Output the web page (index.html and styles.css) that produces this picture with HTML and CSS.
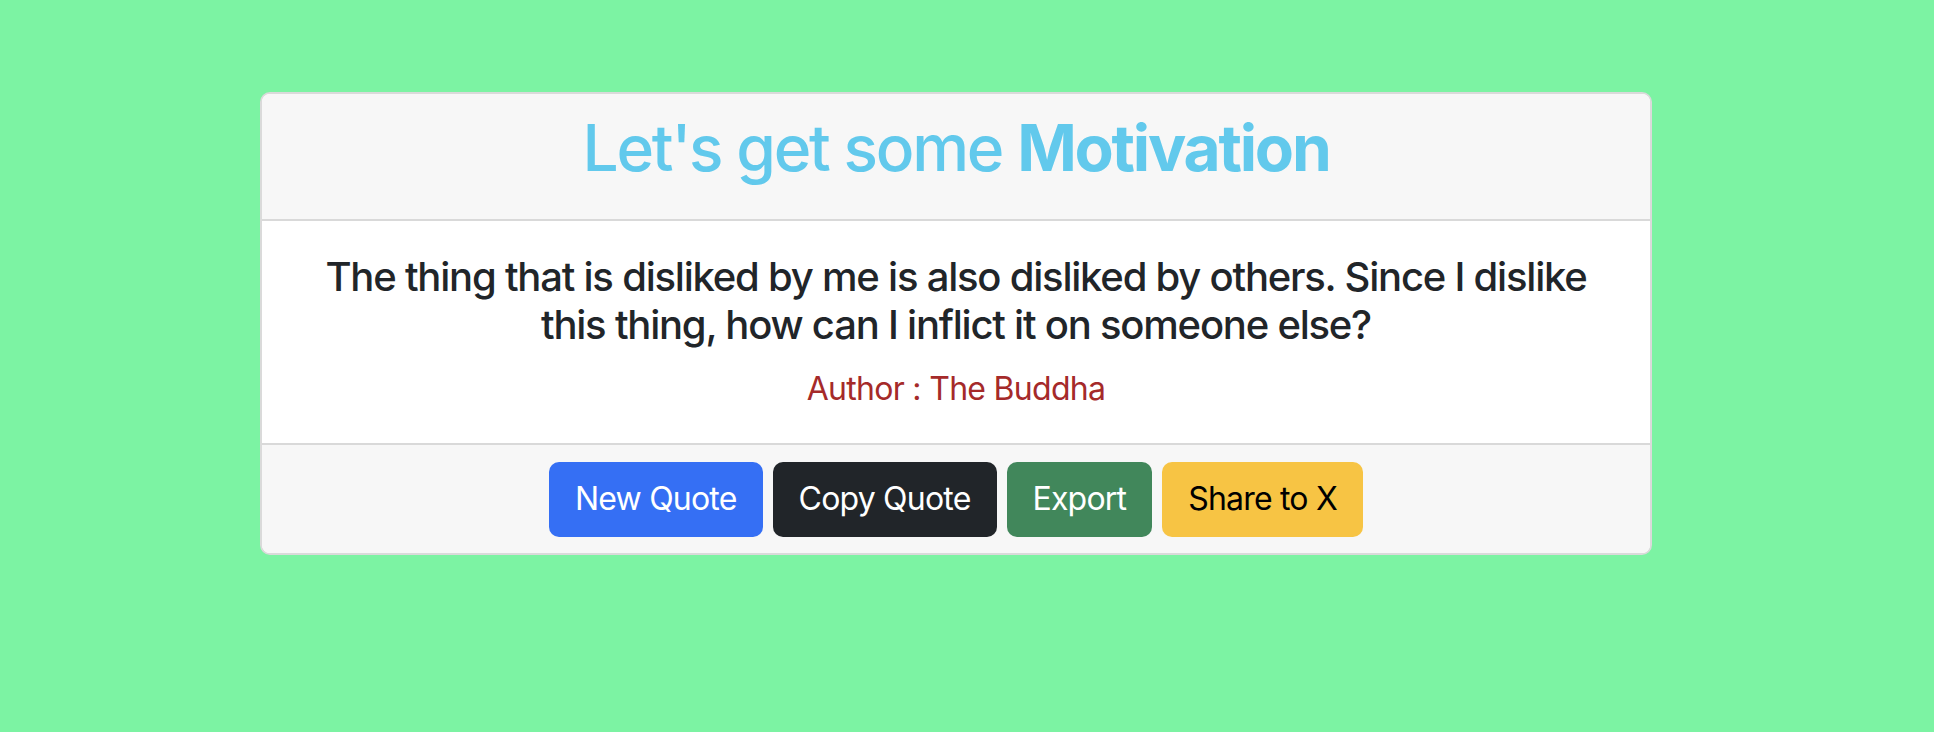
FILE: index.html
```html
<!DOCTYPE html>
<html lang="en">
<head>
<meta charset="utf-8">
<title>Quote Generator</title>
<link rel="stylesheet" href="styles.css">
</head>
<body>
<main class="page">
  <section class="card">
    <header class="card-header">
      <h1 class="title">Let's get some <strong>Motivation</strong></h1>
    </header>
    <div class="card-body">
      <h5 class="quote">The thing that is disliked by me is also disliked by others. Since I dislike this thing, how can I inflict it on someone else?</h5>
      <p class="author">Author : The Buddha</p>
    </div>
    <footer class="card-footer">
      <button class="btn btn-primary" type="button">New Quote</button>
      <button class="btn btn-dark" type="button">Copy Quote</button>
      <button class="btn btn-success" type="button">Export</button>
      <button class="btn btn-warning" type="button">Share to X</button>
    </footer>
  </section>
</main>
</body>
</html>
```
FILE: styles.css
```css
* { box-sizing: border-box; }
html, body { margin: 0; padding: 0; }
body {
  background: #7cf3a3;
  font-family: Inter, "Noto Sans", "Liberation Sans", sans-serif;
  color: #212529;
  height: 732px;
}
.page {
  padding: 92px 282px 0 260px;
}
.card {
  background: #ffffff;
  border: 2px solid #dadada;
  border-radius: 10px;
  overflow: hidden;
}
.card-header {
  background: #f7f7f7;
  border-bottom: 2px solid #d9d9d9;
  padding: 16px 32px;
  text-align: center;
}
.title {
  margin: 0 0 16px;
  font-size: 64px;
  line-height: 1.2;
  font-weight: 500;
  color: #62c9ec;
  letter-spacing: -2.2px;
}
.title strong { font-weight: 700; }
.card-body {
  padding: 32px 32px 30px;
  text-align: center;
}
.quote {
  margin: 0 0 16px;
  font-size: 40px;
  line-height: 1.2;
  font-weight: 500;
  color: #212529;
  letter-spacing: -1.22px;
  padding: 0 20px;
}
.author {
  margin: 0;
  font-size: 32px;
  line-height: 1.5;
  color: #a52a2a;
  letter-spacing: -0.7px;
}
.card-footer {
  background: #f7f7f7;
  border-top: 2px solid #d9d9d9;
  padding: 17px 32px 16px;
  display: flex;
  justify-content: center;
  gap: 10px;
}
.btn {
  font-family: inherit;
  font-size: 32px;
  line-height: 1.5;
  padding: 11.5px 24px;
  border: 2px solid transparent;
  border-radius: 10px;
  letter-spacing: -0.8px;
  cursor: pointer;
}
.btn-primary { background: #356ff4; color: #fff; }
.btn-dark { background: #212529; color: #fff; }
.btn-success { background: #41875b; color: #fff; }
.btn-warning { background: #f7c444; color: #000; }
```
